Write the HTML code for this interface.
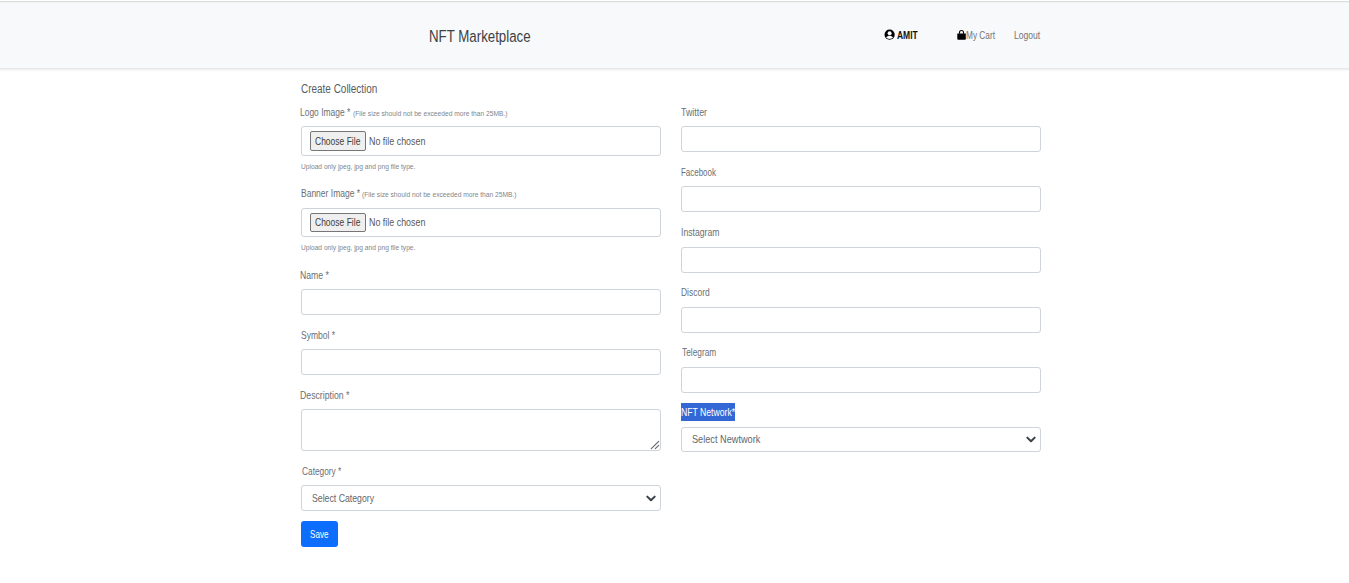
<!DOCTYPE html>
<html><head><meta charset="utf-8"><title>Create Collection</title>
<style>
html,body{margin:0;padding:0;background:#fff;}
body{width:1349px;height:583px;overflow:hidden;position:relative;font-family:"Liberation Sans",sans-serif;}
#hdr{position:absolute;left:0;top:2px;width:1349px;height:66px;background:#f8f9fa;}
.bx{position:absolute;box-sizing:border-box;border:1px solid #ced4da;border-radius:3px;background:#fff;}
.fb{position:absolute;box-sizing:border-box;border:1px solid #767676;border-radius:2px;background:#efefef;}
.t{position:absolute;line-height:1;white-space:nowrap;transform-origin:0 0;}
svg{display:block}
</style></head><body>
<div id="hdr"></div>
<div style="position:absolute;left:0;top:1px;width:1349px;height:1px;background:#dcdcdc"></div>
<div style="position:absolute;left:0;top:2px;width:1349px;height:1px;background:#f1f2f2"></div>
<div style="position:absolute;left:0;top:68px;width:1349px;height:1px;background:#e8e8e8"></div>
<div style="position:absolute;left:0;top:69px;width:1349px;height:1px;background:#f1f1f1"></div>
<div style="position:absolute;left:0;top:70px;width:1349px;height:1px;background:#f8f8f8"></div>
<div style="position:absolute;left:0;top:71px;width:1349px;height:1px;background:#fdfdfd"></div>
<div class="bx" style="left:301px;top:126px;width:360px;height:30px;"></div>
<div class="fb" style="left:310px;top:131px;width:56px;height:20px"></div>
<div class="bx" style="left:301px;top:208px;width:360px;height:29px;"></div>
<div class="fb" style="left:310px;top:213px;width:56px;height:19px"></div>
<div class="bx" style="left:301px;top:289px;width:360px;height:26px;"></div>
<div class="bx" style="left:301px;top:349px;width:360px;height:26px;"></div>
<div class="bx" style="left:301px;top:409px;width:360px;height:42px;"></div>
<div class="bx" style="left:301px;top:485px;width:360px;height:26px;"></div>
<div class="bx" style="left:681px;top:126px;width:360px;height:26px;"></div>
<div class="bx" style="left:681px;top:186px;width:360px;height:26px;"></div>
<div class="bx" style="left:681px;top:247px;width:360px;height:26px;"></div>
<div class="bx" style="left:681px;top:307px;width:360px;height:26px;"></div>
<div class="bx" style="left:681px;top:367px;width:360px;height:26px;"></div>
<div class="bx" style="left:681px;top:427px;width:360px;height:25px;"></div>
<div style="position:absolute;left:681px;top:403px;width:54px;height:18px;background:#3367d6"></div>
<div style="position:absolute;left:301px;top:521px;width:37px;height:26px;background:#0d6efd;border-radius:3px"></div>
<svg style="position:absolute;left:645px;top:494px" width="12" height="9" viewBox="0 0 12 9"><path d="M2.3 2.6 L6 6.3 L9.7 2.6" fill="none" stroke="#3a4048" stroke-width="2" stroke-linecap="round" stroke-linejoin="round"/></svg>
<svg style="position:absolute;left:1025px;top:435px" width="12" height="9" viewBox="0 0 12 9"><path d="M2.3 2.6 L6 6.3 L9.7 2.6" fill="none" stroke="#3a4048" stroke-width="2" stroke-linecap="round" stroke-linejoin="round"/></svg>
<svg style="position:absolute;left:640px;top:430px" width="26" height="26" viewBox="0 0 26 26"><path d="M11.3 18.7 L18.7 11.3 M15.3 18.7 L18.7 15.3" stroke="#666" stroke-width="1.15" stroke-linecap="round"/></svg>
<svg style="position:absolute;left:884px;top:29px" width="12" height="12" viewBox="0 0 12 12"><circle cx="5.6" cy="5.7" r="5.1" fill="#000"/><circle cx="5.6" cy="4.3" r="2" fill="#fff"/><path d="M2.2 8.6 C3 7.2 4.2 6.8 5.6 6.8 C7 6.8 8.2 7.2 9 8.6 C8 9.6 6.9 10 5.6 10 C4.3 10 3.2 9.6 2.2 8.6 Z" fill="#fff"/></svg>
<svg style="position:absolute;left:956px;top:29px" width="12" height="12" viewBox="0 0 12 12"><path d="M3.5 4.8 V3.5 A2 2 0 0 1 7.5 3.5 V4.8" fill="none" stroke="#000" stroke-width="1.1"/><path d="M1.3 4.6 H9.8 V10 Q9.8 10.8 9 10.8 H2.1 Q1.3 10.8 1.3 10 Z" fill="#000"/></svg>
<span class="t" style="left:428.81px;top:29.0px;font-size:16.76px;transform:scaleX(0.7929);color:#3d4145;font-weight:400">NFT Marketplace</span>
<span class="t" style="left:897.0px;top:29.8px;font-size:10.754px;transform:scaleX(0.7889);color:#111;font-weight:700">AMIT</span>
<span class="t" style="left:965.94px;top:30.2px;font-size:10.9px;transform:scaleX(0.7595);color:#737475;font-weight:400">My Cart</span>
<span class="t" style="left:1014.42px;top:30.2px;font-size:10.9px;transform:scaleX(0.7848);color:#737475;font-weight:400">Logout</span>
<span class="t" style="left:301.2px;top:83.8px;font-size:11.872px;transform:scaleX(0.84);color:#585d62;font-weight:400">Create Collection</span>
<span class="t" style="left:300.27px;top:107.9px;font-size:10.2px;transform:scaleX(0.83);color:#6a6f74;font-weight:400">Logo Image *</span>
<span class="t" style="left:352.8px;top:110.4px;font-size:8.1px;transform:scaleX(0.8239);color:#80868c;font-weight:400">(File size should not be exceeded more than 25MB.)</span>
<span class="t" style="left:315.4px;top:135.8px;font-size:11.2px;transform:scaleX(0.76);color:#3d3d3d;font-weight:400">Choose File</span>
<span class="t" style="left:368.5px;top:135.8px;font-size:11.2px;transform:scaleX(0.7957);color:#585858;font-weight:400">No file chosen</span>
<span class="t" style="left:301.2px;top:163.0px;font-size:8.0px;transform:scaleX(0.8297);color:#80868c;font-weight:400">Upload only jpeg, jpg and png file type.</span>
<span class="t" style="left:300.77px;top:188.8px;font-size:10.2px;transform:scaleX(0.8343);color:#6a6f74;font-weight:400">Banner Image *</span>
<span class="t" style="left:362.2px;top:191.0px;font-size:8.1px;transform:scaleX(0.8239);color:#80868c;font-weight:400">(File size should not be exceeded more than 25MB.)</span>
<span class="t" style="left:315.4px;top:217.3px;font-size:11.2px;transform:scaleX(0.76);color:#3d3d3d;font-weight:400">Choose File</span>
<span class="t" style="left:368.5px;top:217.3px;font-size:11.2px;transform:scaleX(0.7957);color:#585858;font-weight:400">No file chosen</span>
<span class="t" style="left:301.2px;top:244.4px;font-size:8.0px;transform:scaleX(0.8297);color:#80868c;font-weight:400">Upload only jpeg, jpg and png file type.</span>
<span class="t" style="left:300.35px;top:271.0px;font-size:10.2px;transform:scaleX(0.8485);color:#6a6f74;font-weight:400">Name *</span>
<span class="t" style="left:300.9px;top:330.9px;font-size:10.2px;transform:scaleX(0.8341);color:#6a6f74;font-weight:400">Symbol *</span>
<span class="t" style="left:300.34px;top:390.9px;font-size:10.2px;transform:scaleX(0.8561);color:#6a6f74;font-weight:400">Description *</span>
<span class="t" style="left:301.6px;top:467.0px;font-size:10.2px;transform:scaleX(0.8167);color:#6a6f74;font-weight:400">Category *</span>
<span class="t" style="left:312.1px;top:492.9px;font-size:10.6px;transform:scaleX(0.8237);color:#62676c;font-weight:400">Select Category</span>
<span class="t" style="left:310.3px;top:529.5px;font-size:10.4px;transform:scaleX(0.7792);color:#fff;font-weight:400">Save</span>
<span class="t" style="left:681.1px;top:108.0px;font-size:10.2px;transform:scaleX(0.8667);color:#6a6f74;font-weight:400">Twitter</span>
<span class="t" style="left:680.72px;top:167.8px;font-size:10.2px;transform:scaleX(0.7795);color:#6a6f74;font-weight:400">Facebook</span>
<span class="t" style="left:680.65px;top:228.1px;font-size:10.2px;transform:scaleX(0.8477);color:#6a6f74;font-weight:400">Instagram</span>
<span class="t" style="left:680.67px;top:288.1px;font-size:10.2px;transform:scaleX(0.8303);color:#6a6f74;font-weight:400">Discord</span>
<span class="t" style="left:681.5px;top:348.0px;font-size:10.2px;transform:scaleX(0.8167);color:#6a6f74;font-weight:400">Telegram</span>
<span class="t" style="left:680.65px;top:407.9px;font-size:10.2px;transform:scaleX(0.8492);color:#fff;font-weight:400">NFT Network*</span>
<span class="t" style="left:692.2px;top:434.0px;font-size:10.6px;transform:scaleX(0.8658);color:#62676c;font-weight:400">Select Newtwork</span>
</body></html>
